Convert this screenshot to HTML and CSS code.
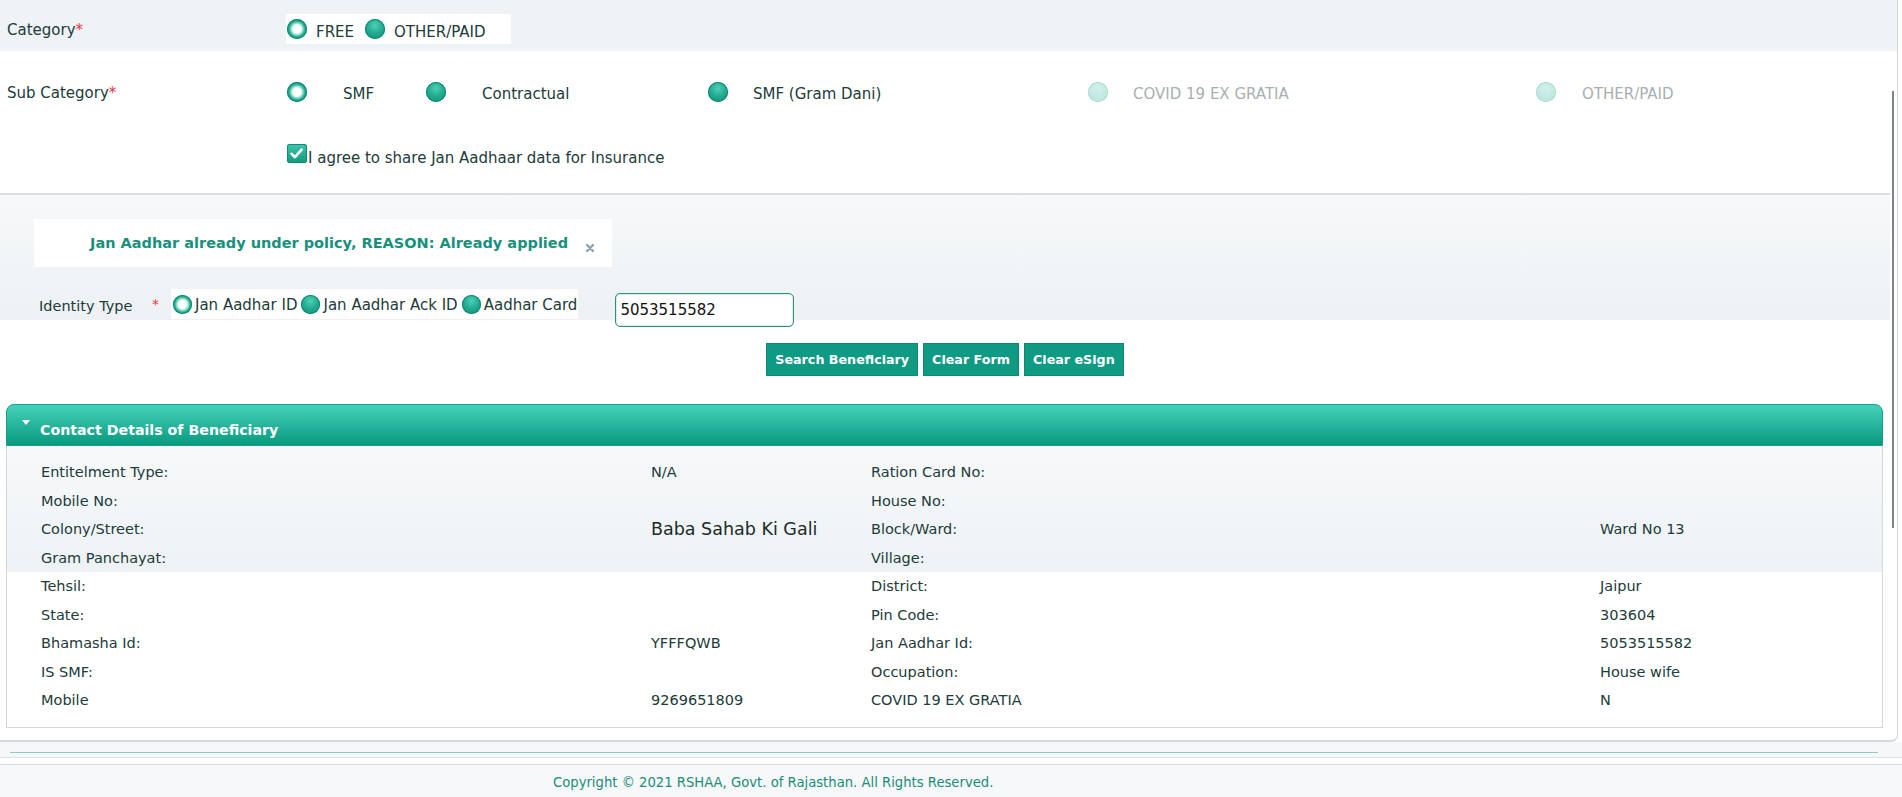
FILE: index.html
```html
<!DOCTYPE html>
<html lang="en">
<head>
<meta charset="utf-8">
<title>Beneficiary</title>
<link rel="stylesheet" href="styles.css">
</head>
<body>
<div class="frame">
  <div class="content">
    <div class="top">
      <div class="cat-row">
        <div class="lbl">Category<span class="req">*</span></div>
        <div class="opt-box">
          <span class="radio on"></span><span class="opt">FREE</span>
          <span class="radio"></span><span class="opt">OTHER/PAID</span>
        </div>
      </div>
      <div class="sub-row">
        <div class="lbl">Sub Category<span class="req">*</span></div>
        <div class="sub-grid">
          <span class="radio on"></span><span class="opt">SMF</span>
          <span class="radio"></span><span class="opt">Contractual</span>
          <span class="radio"></span><span class="opt">SMF (Gram Dani)</span>
          <span class="radio off"></span><span class="opt dis">COVID 19 EX GRATIA</span>
          <span class="radio off"></span><span class="opt dis">OTHER/PAID</span>
        </div>
      </div>
      <div class="agree-row"><span class="check"><svg viewBox="0 0 19 19" width="19" height="19"><path d="M4.5 9.8 L8 13.2 L14.6 5.6" fill="none" stroke="#fff" stroke-width="2.6" stroke-linecap="round" stroke-linejoin="round"/></svg></span>I agree to share Jan Aadhaar data for Insurance</div>
    </div>

    <div class="search">
      <div class="alert">
        <span class="alert-text">Jan Aadhar already under policy, REASON: Already applied</span>
        <span class="alert-close"><svg viewBox="0 0 8 8" width="8" height="8"><path d="M1 1 L7 7 M7 1 L1 7" stroke="#8ca2b3" stroke-width="2.4" stroke-linecap="round"/></svg></span>
      </div>
      <div class="id-row">
        <div class="id-lbl">Identity Type</div>
        <div class="id-req">*</div>
        <div class="id-box">
          <span class="radio sm on"></span><span class="id-opt">Jan Aadhar ID</span>
          <span class="radio sm"></span><span class="id-opt">Jan Aadhar Ack ID</span>
          <span class="radio sm"></span><span class="id-opt">Aadhar Card</span>
        </div>
        <div class="id-input">5053515582</div>
      </div>
      <div class="btn-row">
        <button class="btn">Search Beneficiary</button>
        <button class="btn">Clear Form</button>
        <button class="btn">Clear eSign</button>
      </div>
    </div>

    <div class="panel">
      <div class="panel-head"><span class="tri"></span><span class="panel-title">Contact Details of Beneficiary</span></div>
      <div class="panel-body">
        <div class="pblock shade">
          <div class="prow"><span>Entitelment Type:</span><span>N/A</span><span>Ration Card No:</span><span></span></div>
          <div class="prow"><span>Mobile No:</span><span></span><span>House No:</span><span></span></div>
          <div class="prow"><span>Colony/Street:</span><span class="big">Baba Sahab Ki Gali</span><span>Block/Ward:</span><span>Ward No 13</span></div>
          <div class="prow"><span>Gram Panchayat:</span><span></span><span>Village:</span><span></span></div>
        </div>
        <div class="pblock plain">
          <div class="prow"><span>Tehsil:</span><span></span><span>District:</span><span>Jaipur</span></div>
          <div class="prow"><span>State:</span><span></span><span>Pin Code:</span><span>303604</span></div>
          <div class="prow"><span>Bhamasha Id:</span><span>YFFFQWB</span><span>Jan Aadhar Id:</span><span>5053515582</span></div>
          <div class="prow"><span>IS SMF:</span><span></span><span>Occupation:</span><span>House wife</span></div>
          <div class="prow"><span>Mobile</span><span>9269651809</span><span>COVID 19 EX GRATIA</span><span>N</span></div>
        </div>
      </div>
    </div>
  </div>
  <div class="track"><div class="thumb"></div></div>
</div>
<div class="strip"><div class="strip-line"></div></div>
<div class="gap"></div>
<footer class="footer">Copyright © 2021 RSHAA, Govt. of Rajasthan. All Rights Reserved.</footer>
</body>
</html>
```
FILE: styles.css
```css
* { box-sizing: border-box; }
html, body { margin: 0; padding: 0; }
body {
  width: 1902px;
  height: 797px;
  overflow: hidden;
  background: #fff;
  font-family: "DejaVu Sans", Verdana, sans-serif;
  font-size: 15px;
  color: #213b3a;
}

.frame {
  display: flex;
  width: 1898px;
  border-right: 1px solid #d3d8db;
  border-bottom: 2px solid #d5d9dc;
  border-bottom-right-radius: 7px;
}
.content { width: 1890px; flex: none; padding-bottom: 12px; }
.track {
  width: 7px;
  flex: none;
  background: linear-gradient(#eff3f6 0 51px, transparent 51px);
}
.thumb { margin: 91px 0 0 2px; width: 2px; height: 437px; background: #7f8487; }

/* top form */
.top { border-bottom: 2px solid #dcdfe2; }
.cat-row {
  display: flex;
  align-items: flex-start;
  height: 51px;
  padding-top: 14px;
  background: #eff3f6;
}
.lbl { width: 286px; flex: none; padding-left: 7px; line-height: 30px; padding-top: 1px; }
.req { color: #e5383b; }
.opt-box {
  display: flex;
  align-items: center;
  width: 225px;
  height: 30px;
  padding-left: 1px;
  background: #fff;
}
.opt-box .radio { margin-right: 9px; }
.opt-box .opt { margin-right: 11px; padding-top: 5px; }

.sub-row { display: flex; height: 52px; padding-top: 30px; }
.sub-row .lbl { line-height: 22px; padding-top: 1px; }
.sub-grid {
  display: grid;
  grid-template-columns: 56px 83px 56px 226px 45px 335px 45px 403px 46px auto;
  align-items: center;
  height: 22px;
  padding-left: 1px;
}
.sub-grid .opt { padding-top: 4px; }
.opt.dis { color: #a7b0b0; }

.agree-row {
  height: 90px;
  padding: 41px 0 0 287px;
  line-height: 20px;
}
.check {
  display: inline-block;
  width: 20px;
  height: 19px;
  border-radius: 3px;
  background: linear-gradient(#3fc5ab, #109a80);
  box-shadow: inset 0 0 0 1px #0e8c74;
  margin-right: 1px;
}
.check svg { display: block; }

/* radios */
.radio {
  display: inline-block;
  flex: none;
  width: 20px;
  height: 20px;
  border-radius: 50%;
  background: radial-gradient(circle at 50% 32%, #4dd0b6 0, #22aa90 48%, #0f8c74 100%);
  box-shadow: inset 0 0 0 1px #0f8a73;
}
.radio.on {
  background: radial-gradient(circle at 50% 50%, #fff 0 3.5px, #e4f7f2 4.5px, #8edbca 6px, #2eb398 7.5px, #14977e 10px);
}
.radio.off {
  background: radial-gradient(circle at 50% 32%, #d2f0ea 0, #b5e4da 100%);
  box-shadow: inset 0 0 0 1px #aadcd2;
}
.radio.sm { width: 19px; height: 19px; }

/* search section */
.search {
  padding-top: 24px;
  background: linear-gradient(#f7f9fa, #edf1f4) top left / 100% 125px no-repeat;
}
.alert {
  display: flex;
  align-items: center;
  width: 578px;
  height: 48px;
  margin-left: 34px;
  padding-left: 56px;
  background: #fff;
}
.alert-text { font-weight: bold; font-size: 14.5px; color: #18907b; white-space: nowrap; }
.alert-close { margin-left: auto; margin-right: 18px; margin-top: 10px; line-height: 0; }

.id-row {
  display: flex;
  align-items: flex-start;
  height: 38px;
  margin-top: 22px;
  padding-left: 39px;
  font-size: 15px;
}
.id-lbl { width: 113px; line-height: 30px; padding-top: 2px; font-size: 14.5px; }
.id-req { width: 19px; color: #e5383b; line-height: 30px; font-size: 14px; }
.id-box {
  display: flex;
  align-items: center;
  height: 30px;
  padding: 0 1px 0 2px;
  background: #fff;
}
.id-box .radio { margin-right: 3px; }
.id-opt { margin-right: 4px; padding-top: 2px; }
.id-opt:last-child { margin-right: 0; }
.id-input {
  flex: none;
  width: 179px;
  height: 34px;
  margin: 4px 0 0 37px;
  padding: 0 4px;
  line-height: 32px;
  font-size: 15px;
  color: #111;
  background: #fff;
  border: 1px solid #2e8f7f;
  border-radius: 5px;
  box-shadow: inset 0 0 2px #7fbfb3;
}

.btn-row { display: flex; justify-content: center; gap: 5px; margin-top: 16px; }
.btn {
  height: 33px;
  padding: 0 8px;
  border: 1px solid #0b8a74;
  background: #0f9a83;
  color: #fff;
  font-family: "DejaVu Sans", Verdana, sans-serif;
  font-weight: bold;
  font-size: 12.7px;
}

/* panel */
.panel { width: 1877px; margin: 28px 0 0 6px; }
.panel-head {
  display: flex;
  align-items: center;
  height: 42px;
  padding-left: 15px;
  border: 1px solid #17a089;
  border-radius: 8px 8px 0 0;
  background: linear-gradient(#45d2ba, #08997f);
  color: #fff;
}
.tri {
  width: 0;
  height: 0;
  border-left: 4px solid transparent;
  border-right: 4px solid transparent;
  border-top: 5px solid #fff;
  margin: -5px 10px 0 0;
}
.panel-title { font-weight: bold; font-size: 14.2px; padding-top: 10px; }
.panel-body { border: 1px solid #d3d9da; border-top: none; }
.pblock.shade { padding-top: 12px; background: linear-gradient(#f7f9fa, #eef2f5); }
.pblock.plain { padding-bottom: 12px; }
.prow {
  display: grid;
  grid-template-columns: 610px 220px 729px 1fr;
  align-items: center;
  height: 28.5px;
  padding-left: 34px;
  font-size: 14.5px;
  line-height: 28.5px;
  white-space: nowrap;
}
.prow .big { font-size: 17.5px; color: #1a2b2a; }

/* bottom */
.strip { height: 16px; padding-top: 10px; background: #f5f7f9; border-bottom: 1px solid #dde1e3; }
.strip-line { margin: 0 24px 0 10px; border-top: 1px solid #8fcabf; }
.gap { height: 6px; }
.footer {
  height: 33px;
  border-top: 1px solid #d6dadd;
  background: #f6f8f9;
  padding: 10px 0 0 553px;
  font-size: 13.2px;
  line-height: 16px;
  color: #1b8c78;
}
```
